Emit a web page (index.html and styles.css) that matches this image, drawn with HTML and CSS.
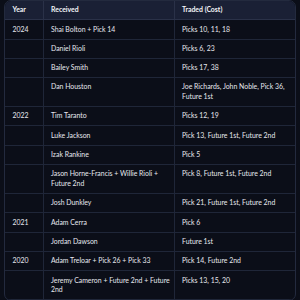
FILE: index.html
```html
<!DOCTYPE html>
<html>
<head>
<meta charset="utf-8">
<link rel="stylesheet" href="styles.css">
</head>
<body>
<div class="wrap">
<table class="trades">
<thead>
<tr><th class="c-year">Year</th><th class="c-rec">Received</th><th class="c-cost">Traded (Cost)</th></tr>
</thead>
<tbody>
<tr><td>2024</td><td>Shai Bolton + Pick 14</td><td>Picks 10, 11, 18</td></tr>
<tr><td></td><td>Daniel Rioli</td><td>Picks 6, 23</td></tr>
<tr><td></td><td>Bailey Smith</td><td>Picks 17, 38</td></tr>
<tr><td></td><td>Dan Houston</td><td>Joe Richards, John Noble, Pick 36, Future 1st</td></tr>
<tr><td>2022</td><td>Tim Taranto</td><td>Picks 12, 19</td></tr>
<tr><td></td><td>Luke Jackson</td><td>Pick 13, Future 1st, Future 2nd</td></tr>
<tr><td></td><td>Izak Rankine</td><td>Pick 5</td></tr>
<tr><td></td><td>Jason Horne-Francis + Willie Rioli + Future 2nd</td><td>Pick 8, Future 1st, Future 2nd</td></tr>
<tr><td></td><td>Josh Dunkley</td><td>Pick 21, Future 1st, Future 2nd</td></tr>
<tr><td>2021</td><td>Adam Cerra</td><td>Pick 6</td></tr>
<tr><td></td><td>Jordan Dawson</td><td>Future 1st</td></tr>
<tr><td>2020</td><td>Adam Treloar + Pick 26 + Pick 33</td><td>Pick 14, Future 2nd</td></tr>
<tr><td></td><td>Jeremy Cameron + Future 2nd + Future 2nd</td><td>Picks 13, 15, 20</td></tr>
</tbody>
</table>
</div>
</body>
</html>
```
FILE: styles.css
```css
html, body {
  margin: 0;
  padding: 0;
  background: #0b0e18;
}
body {
  font-family: Lato, "Noto Sans", sans-serif;
  font-size: 6.9px;
  color: #e6e8ee;
}
.wrap {
  margin: 0 4px 0 4px;
  border: 1px solid #232a3e;
  border-radius: 7px;
  overflow: hidden;
  background: #0b0e18;
}
.trades {
  width: 100%;
  border-collapse: collapse;
  table-layout: fixed;
}
.trades th, .trades td {
  box-sizing: border-box;
  text-align: left;
  vertical-align: top;
  padding: 4.3px 0 4.3px 7.5px;
  line-height: 9.7px;
  border-bottom: 1px solid #1f2638;
  border-right: 1px solid #1f2638;
}
.trades th:last-child, .trades td:last-child {
  border-right: none;
}
.trades td:last-child {
  padding-right: 4px;
}
.trades th {
  background: #1a2035;
  font-weight: 700;
  color: #f3f4f7;
  border-bottom-color: #2a3148;
  border-right-color: #2a3148;
}
.c-year { width: 38px; }
.c-rec { width: 131px; }
```
